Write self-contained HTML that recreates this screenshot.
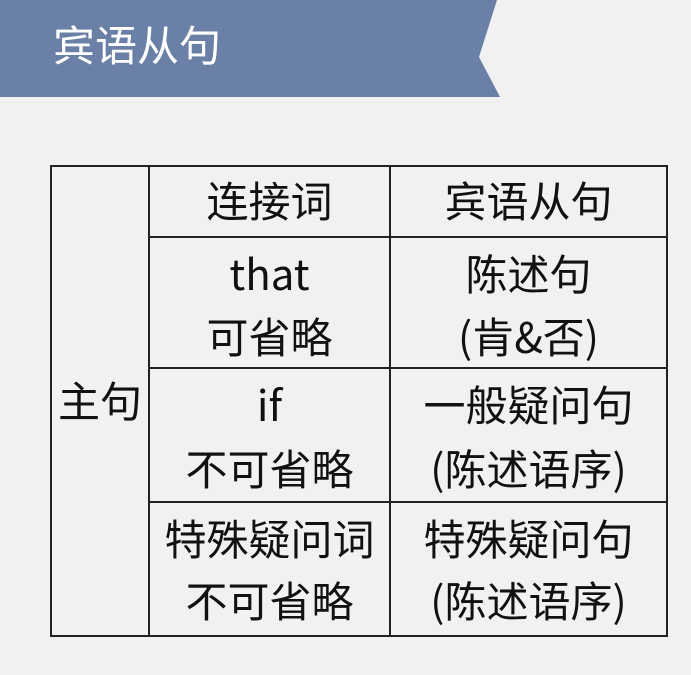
<!DOCTYPE html>
<html><head><meta charset="utf-8"><style>
body{margin:0;width:691px;height:675px;background:#f1f1f1;position:relative;overflow:hidden;font-family:"Noto Sans CJK SC",sans-serif}
.t{position:absolute;color:#111;font-size:42px;text-align:center;line-height:44px;font-family:"Noto Sans CJK SC",sans-serif}
.l{position:absolute;background:#222}
</style></head><body>
<svg width="691" height="100" style="position:absolute;left:0;top:0"><polygon points="0,0 497,0 479,57 500,97 0,97" fill="#6b80a7"/></svg>
<div style="position:absolute;left:53px;top:16px;color:#fff;font-size:42px;line-height:56px;font-family:'Noto Sans CJK SC',sans-serif">宾语从句</div>
<div class="l" style="left:50px;top:165px;width:618px;height:2px"></div>
<div class="l" style="left:50px;top:635px;width:618px;height:2px"></div>
<div class="l" style="left:50px;top:165px;width:2px;height:472px"></div>
<div class="l" style="left:666px;top:165px;width:2px;height:472px"></div>
<div class="l" style="left:148px;top:165px;width:2px;height:472px"></div>
<div class="l" style="left:389px;top:165px;width:2px;height:472px"></div>
<div class="l" style="left:148px;top:236px;width:520px;height:2px"></div>
<div class="l" style="left:148px;top:367px;width:520px;height:2px"></div>
<div class="l" style="left:148px;top:501px;width:520px;height:2px"></div>
<div class="t" style="left:52px;top:378px;width:96px">主句</div>
<div class="t" style="left:150px;top:178px;width:239px">连接词</div>
<div class="t" style="left:391px;top:178px;width:275px">宾语从句</div>
<div class="t" style="left:150px;top:241px;width:239px;line-height:63px">that<br>可省略</div>
<div class="t" style="left:391px;top:241px;width:275px;line-height:63px">陈述句<br>(肯&amp;否)</div>
<div class="t" style="left:150px;top:372px;width:239px;line-height:64px">if<br>不可省略</div>
<div class="t" style="left:391px;top:372px;width:275px;line-height:64px">一般疑问句<br>(陈述语序)</div>
<div class="t" style="left:150px;top:507px;width:239px;line-height:62px">特殊疑问词<br>不可省略</div>
<div class="t" style="left:391px;top:507px;width:275px;line-height:62px">特殊疑问句<br>(陈述语序)</div>
</body></html>
